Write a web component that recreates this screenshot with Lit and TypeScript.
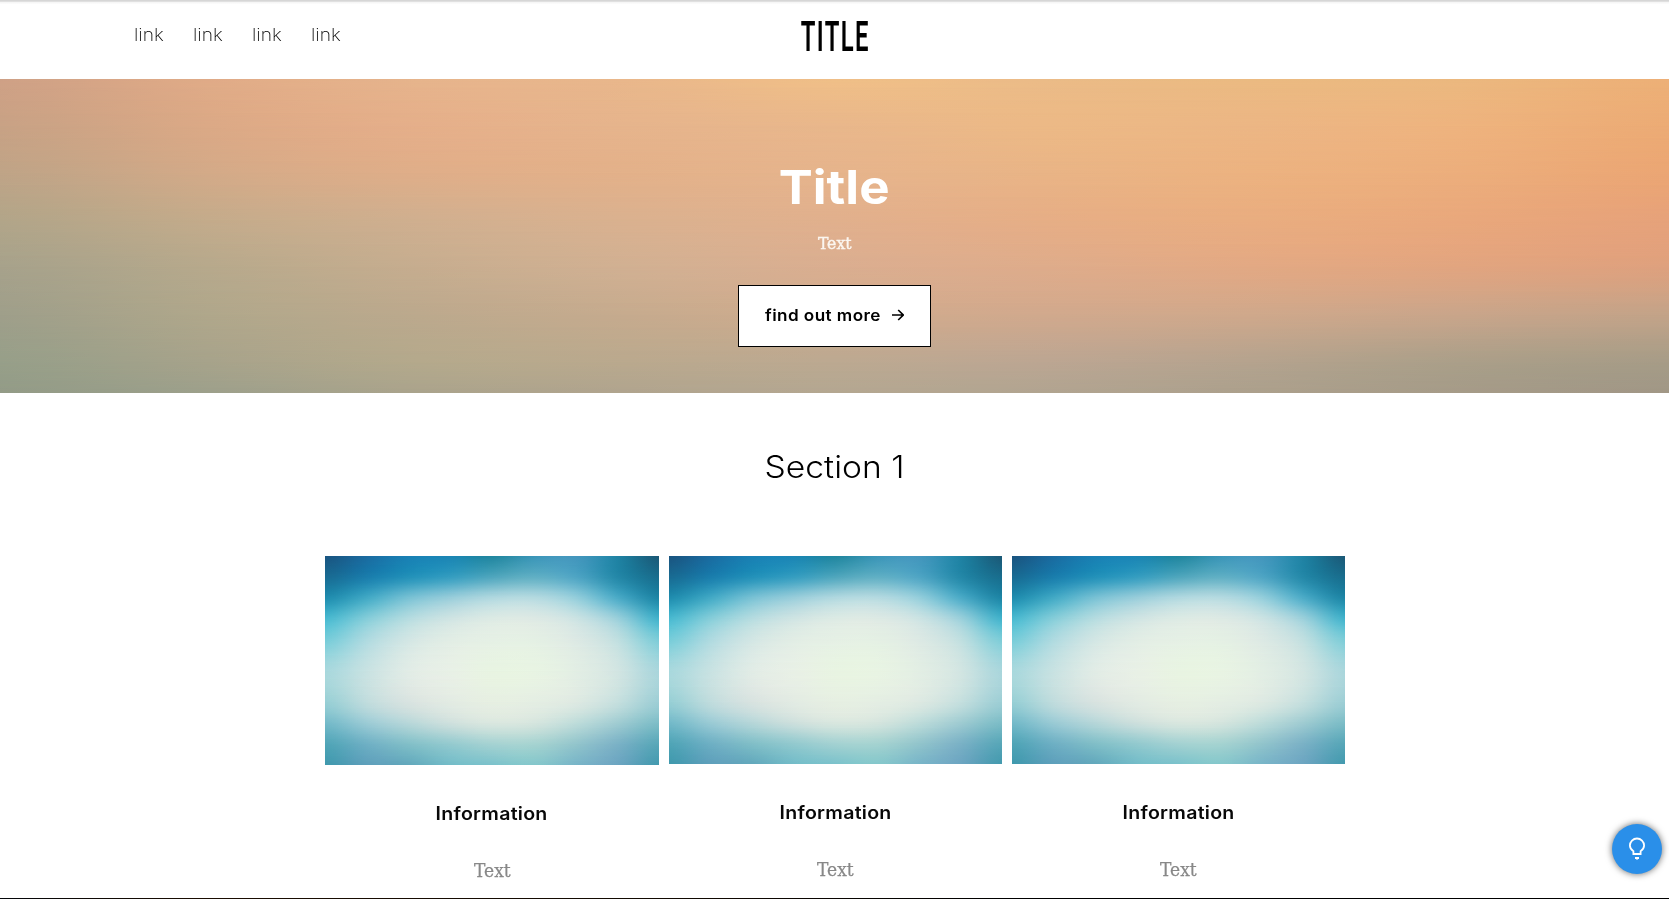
import { LitElement, html, css } from "lit";
import { customElement, property } from "lit/decorators.js";
import { styleMap } from "lit/directives/style-map.js";

type Mesh = Array<[number, string]>;
type Rgb = number[];

const DUSK: Mesh = [
  [0, "cfa186 e0ab87 e6b48c e9b78b f0bf87 ebbb87 ebba81 ebb87f edb077"],
  [15, "c8a285 dba986 e5af8a e6b48c e9b78b ecb986 ecb684 eeb37e ecab75"],
  [30, "bfa487 d3aa88 dfae89 e3b18a e6b48c e9b486 ecb280 ecae7c eba674"],
  [45, "b2a589 c4ab8b d0af8f dab18f e1b08d e6ae86 e9ad80 e9a87c e6a27a"],
  [60, "a7a28b b7a98c c6ad8f d1b092 daae90 deac8b e2a984 e1a580 dea17e"],
  [75, "9f9f8a b0a78b bca98d c6ab8e cfab8d d1a98d cfa88b c9a58a c3a388"],
  [90, "979f89 a7a38b b4a98c baa98e bca991 bca692 b5a38e ab9f89 a79c87"],
  [100, "939b87 9da08b aaa38c b0a48e b4a791 b1a490 aca08c a69b88 a19786"],
];

const LAGOON: Mesh = [
  [0, "1a5480 1b6ba0 1a80b4 1b85b4 20869f 3a95b8 4496bd 2083a4 1b5876"],
  [10, "196b92 1a7dac 2391b9 359dc0 4fa6bd 60afc4 4fa5c4 2488a8 196d8d"],
  [20, "1f8cae 42a9c5 78c1d4 98cdda b0d8df b5dae0 95cedb 4cabc7 1d85a5"],
  [30, "48b9d0 85cdd9 b5dce0 cfe4e3 dceae4 dde9e4 cce3e3 9bd0db 41b2cb"],
  [40, "75ccd9 aedae0 d2e6e4 e1ede5 e5f0e5 e4f0e4 dce9e4 c0dfe0 7bccd8"],
  [55, "a8d8dd c8e2e2 e1ece6 e8f0e6 e8f4e2 e8f4e3 e2eee4 d2e5e2 a9d6dc"],
  [70, "97cfd5 c0dcdd d8e3e0 e2ebe3 e6efe2 e4eee3 dde9e2 c5dfde 9dced5"],
  [80, "74bac9 9bcbd5 b7d7d9 cee0dd d9e7df d5e5de bedcda a0ccd2 7dbdc7"],
  [90, "50a5b7 6fb0c4 82bfc8 94cacf a5d2d2 a6d3d1 93c5cc 7bb2c6 58a7b8"],
  [100, "3f99ad 5e9fbb 62a8bc 73bcc8 7bc2cb 84c7cb 78b5c8 6ca5c1 439aae"],
];

const parse = (row: string): Rgb[] =>
  row.split(" ").map((c) => [0, 2, 4].map((i) => parseInt(c.slice(i, i + 2), 16)));

/** Catmull-Rom value at t between the second and third of four samples. */
const spline = (p: number[], t: number) =>
  p[1] +
  0.5 * t * (p[2] - p[0] + t * (2 * p[0] - 5 * p[1] + 4 * p[2] - p[3] + t * (3 * (p[1] - p[2]) + p[3] - p[0])));

/** Inserts smooth in-between samples into a list of number vectors. */
function refine(list: Rgb[], steps: number): Rgb[] {
  const at = (i: number) => list[Math.max(0, Math.min(list.length - 1, i))];
  const out: Rgb[] = [];
  for (let i = 0; i < list.length - 1; i++) {
    for (let s = 0; s < steps; s++) {
      out.push(list[i].map((_, k) => spline([at(i - 1)[k], at(i)[k], at(i + 1)[k], at(i + 2)[k]], s / steps)));
    }
  }
  out.push(list[list.length - 1]);
  return out;
}

/** Fills its box with a colour mesh: one horizontal gradient per row, each fading in over the previous one. */
@customElement("mesh-fill")
export class MeshFill extends LitElement {
  @property({ attribute: false }) mesh: Mesh = [];

  static styles = css`
    :host { display: grid; overflow: hidden; }
    .row { grid-area: 1 / 1; }
  `;

  render() {
    // Each vector is the row's position followed by its flattened colours.
    const rows = refine(this.mesh.map(([y, c]) => [y, ...refine(parse(c), 4).flat()]), 4);
    return rows.map(([y, ...flat], i) => {
      const stops: string[] = [];
      for (let k = 0; k < flat.length; k += 3) {
        stops.push(`rgb(${flat.slice(k, k + 3).map((v) => v.toFixed(1)).join(" ")})`);
      }
      return html`<div class="row" style=${styleMap({
        backgroundImage: `linear-gradient(to right, ${stops.join(", ")})`,
        maskImage: i ? `linear-gradient(to bottom, transparent ${rows[i - 1][0]}%, #000 ${y}%)` : "none",
      })}></div>`;
    });
  }
}

@customElement("info-card")
export class InfoCard extends LitElement {
  static styles = css`
    :host { display: flex; flex-direction: column; align-items: center; }
    mesh-fill { width: 100%; height: var(--picture-height, 208px); }
    .name {
      margin: 37px 0 0; font: 600 18px/24px Inter, sans-serif;
      letter-spacing: 0.25px; color: #080808; transform: scaleX(1.085);
    }
    .text {
      margin: 33px 0 0; font: 18px/24px "DejaVu Serif", serif; color: #888;
      transform: scaleX(0.95); -webkit-text-stroke: 0.25px #888;
    }
  `;

  render() {
    return html`
      <mesh-fill .mesh=${LAGOON}></mesh-fill>
      <h3 class="name">Information</h3>
      <p class="text">Text</p>
    `;
  }
}

@customElement("app-root")
export class AppRoot extends LitElement {
  static styles = css`
    :host {
      display: block; position: relative; height: 899px; overflow: hidden;
      background: #fff; font-family: Inter, sans-serif; color: #000;
    }
    .page { display: flex; flex-direction: column; height: 100%; }
    .bar {
      box-sizing: border-box; flex: none; height: 79px; padding: 0 134px;
      display: grid; grid-template-columns: 1fr auto 1fr; align-items: start;
      background: linear-gradient(#d6d6d6 0 1px, #e0e0e0 1px 2px, #f6f6f6 2px 3px, #fff 4px);
    }
    .links { display: flex; gap: 30px; padding-top: 23px; }
    .link {
      width: 29px; font-size: 17.5px; line-height: 24px; font-weight: 200;
      white-space: nowrap; color: #000; text-decoration: none;
      transform: scaleX(1.1); transform-origin: left;
    }
    .brand {
      padding-top: 10px; font: 600 43px/52px Roboto, sans-serif;
      width: 68px; display: flex; justify-content: center;
    }
    .brand-name { letter-spacing: 2.5px; margin-right: -2.5px; transform: scaleX(0.555); }
    .hero { flex: none; display: grid; height: 314px; }
    .hero-fill { grid-area: 1 / 1; }
    .hero-body {
      grid-area: 1 / 1; z-index: 1;
      display: flex; flex-direction: column; align-items: center; color: #fff;
    }
    .hero-title {
      margin: 78px 0 0; font-size: 47px; line-height: 60px; font-weight: 700;
      transform: scaleX(1.085);
    }
    .hero-text {
      margin: 15px 0 0; font: 16.5px/24px "DejaVu Serif", serif; transform: scaleX(0.95);
      color: #fbf6f0; -webkit-text-stroke: 0.4px #fbf6f0;
    }
    .cta {
      box-sizing: border-box; width: 193px; height: 62px; margin-top: 29px; padding: 0 26px 2px 26px;
      display: flex; align-items: center; justify-content: space-between;
      border: 1px solid #000; background: #fff; color: #000;
      font: 600 16px/20px Inter, sans-serif; letter-spacing: 0.4px; white-space: nowrap;
    }
    .cta-label { transform: scaleX(1.07); transform-origin: left; }
    .arrow { width: 12px; height: 12px; }
    .section-title {
      margin: 53px 0 0; text-align: center; font-size: 31px; line-height: 42px; font-weight: 300;
      transform: scaleX(1.085);
    }
    .cards {
      display: grid; grid-template-columns: 334px 333px 333px; gap: 10px;
      justify-content: start; margin: 68px 0 0 325px;
    }
    .tall { --picture-height: 209px; }
    .next { height: 1px; margin-top: auto; background: linear-gradient(to right, #05070a, #1a0d02 12%, #120a02 40%, #000 60%); }
    .tip {
      position: absolute; right: 7px; bottom: 25px; width: 50px; height: 50px; padding: 0;
      border: 0; border-radius: 50%; background: #2a8fe9; color: #fff;
      display: grid; place-items: center; box-shadow: 0 0 7px rgba(0, 0, 0, 0.6);
    }
  `;

  render() {
    return html`
      <div class="page">
        <header class="bar">
          <nav class="links">
            ${[0, 1, 2, 3].map(() => html`<a class="link">link</a>`)}
          </nav>
          <div class="brand"><span class="brand-name">TITLE</span></div>
        </header>
        <section class="hero">
          <mesh-fill class="hero-fill" .mesh=${DUSK}></mesh-fill>
          <div class="hero-body">
            <h1 class="hero-title">Title</h1>
            <p class="hero-text">Text</p>
            <button class="cta">
              <span class="cta-label">find out more</span>
              <svg class="arrow" viewBox="0 0 12 12" fill="none" stroke="currentColor" stroke-width="1.7">
                <path d="M0 6H11M6.2 1L11.2 6L6.2 11" />
              </svg>
            </button>
          </div>
        </section>
        <h2 class="section-title">Section 1</h2>
        <div class="cards">
          <info-card class="tall"></info-card>
          <info-card></info-card>
          <info-card></info-card>
        </div>
        <div class="next"></div>
      </div>
      <button class="tip" aria-label="Tips">
        <svg width="18" height="24" viewBox="0 0 18 24" fill="none" stroke="currentColor" stroke-width="1.8">
          <path d="M5.4 17V14.2C3 12.6 1.9 10.9 1.9 8.6A7.1 7.1 0 0 1 16.1 8.6C16.1 10.9 15 12.6 12.6 14.2V17Z" />
          <path d="M7 20H11V22H10L9 23L8 22H7Z" fill="currentColor" stroke="none" />
        </svg>
      </button>
    `;
  }
}
